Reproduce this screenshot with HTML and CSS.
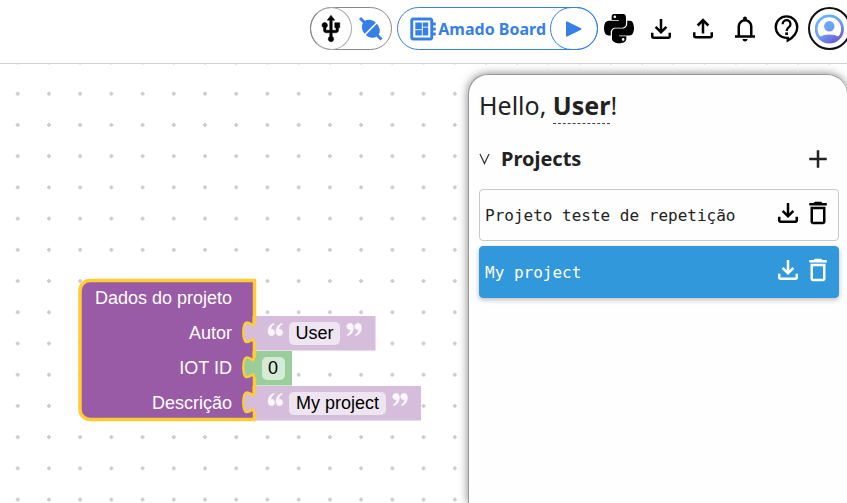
FILE: index.html
```html
<!DOCTYPE html>
<html lang="en">
<head>
<meta charset="utf-8">
<title>Block editor</title>
<link rel="stylesheet" href="styles.css">
</head>
<body>
<svg class="defs" aria-hidden="true">
  <symbol id="download" viewBox="0 0 24 24"><path d="M12 16l-5-5 1.400-1.450 2.600 2.600V4h2v8.150l2.600-2.600L17 11zM6 20q-.825 0-1.412-.587T4 18v-3h2v3h12v-3h2v3q0 .825-.587 1.413T18 20z"/></symbol>
  <symbol id="trash" viewBox="0 0 24 24"><path d="M6 19c0 1.100.9 2 2 2h8c1.100 0 2-.9 2-2V7H6v12zM8 9h8v10H8V9zm7.500-5-1-1h-5l-1 1H5v2h14V4z"/></symbol>
</svg>
<header class="topbar">
  <div class="pill serial">
    <button class="serial-usb" aria-label="USB"><svg class="icon" viewBox="0 0 24 24"><path d="M15 7v4h1v2h-3V5h2l-3-4-3 4h2v8H8v-2.070c.7-.37 1.200-1.080 1.200-1.930 0-1.210-.99-2.200-2.200-2.200-1.210 0-2.200.99-2.200 2.200 0 .85.5 1.560 1.200 1.930V13c0 1.110.89 2 2 2h3v3.050c-.71.37-1.200 1.100-1.200 1.950 0 1.220.99 2.200 2.200 2.200 1.210 0 2.200-.98 2.200-2.200 0-.85-.49-1.580-1.200-1.950V15h3c1.110 0 2-.89 2-2v-2h1V7h-4z" stroke="#000" stroke-width=".4"/></svg></button>
    <button class="serial-plug" aria-label="Connect"><svg class="icon blue" viewBox="0 0 30 30"><path d="M3 4l21.500 21.500" stroke="#347fe8" stroke-width="3"/><ellipse cx="13.800" cy="14.800" rx="10" ry="8" transform="rotate(45 13.800 14.800)"/><path d="M7 21.600L20.600 8" stroke="#fff" stroke-width="1.500"/></svg></button>
  </div>
  <div class="pill board">
    <button class="board-name"><svg class="icon blue" viewBox="0 0 24 24"><path d="M22 9V7h-2V5c0-1.100-.9-2-2-2H4c-1.100 0-2 .9-2 2v14c0 1.100.9 2 2 2h14c1.100 0 2-.9 2-2v-2h2v-2h-2v-2h2v-2h-2V9h2zm-4 10H4V5h14v14zM6 13h5v4H6v-4zm6-6h4v3h-4V7zM6 7h5v5H6V7zm6 4h4v6h-4v-6z" stroke="#347fe8" stroke-width=".3"/></svg>Amado Board</button>
    <button class="board-run" aria-label="Run"><svg class="icon blue" viewBox="0 0 30 30"><path d="M7 8.200q0-1.200 1.200-.7L22 14.300q1 .7 0 1.400L8.200 22.500q-1.200.5-1.200-.7z"/></svg></button>
  </div>
  <button class="tool" aria-label="Python code"><svg class="icon" viewBox="0 44 448 448"><path d="M439.800 200.500c-7.700-30.900-22.300-54.200-53.400-54.200h-40.100v47.400c0 36.800-31.200 67.800-66.800 67.800H172.700c-29.200 0-53.400 25-53.400 54.300v101.800c0 29 25.200 46 53.400 54.300 33.800 9.900 66.300 11.700 106.800 0 26.900-7.800 53.400-23.500 53.400-54.300v-40.700H226.200v-13.600h160.200c31.100 0 42.600-21.700 53.400-54.200 11.200-33.500 10.700-65.700 0-108.600zM286.200 404c11.100 0 20.100 9.100 20.100 20.300 0 11.300-9 20.400-20.100 20.400-11 0-20.100-9.200-20.100-20.400.1-11.300 9.100-20.300 20.100-20.300zM167.800 248.100h106.800c29.700 0 53.400-24.500 53.400-54.300V91.900c0-29-24.400-50.700-53.400-55.600-35.800-5.900-74.700-5.600-106.800.1-45.200 8-53.400 24.700-53.400 55.600v40.700h106.900v13.600h-147c-31.100 0-58.300 18.700-66.800 54.200-9.800 40.700-10.200 66.100 0 108.600 7.600 31.600 25.700 54.200 56.800 54.200H101v-48.800c0-35.300 30.500-66.400 66.800-66.400zm-6.700-142.600c-11.100 0-20.100-9.100-20.100-20.300.1-11.300 9-20.400 20.100-20.400 11 0 20.100 9.200 20.100 20.400s-9 20.300-20.100 20.300z"/></svg></button>
  <button class="tool" aria-label="Download"><svg class="icon"><use href="#download"/></svg></button>
  <button class="tool" aria-label="Upload"><svg class="icon" viewBox="0 0 24 24"><path d="M11 15.500V7.300L8.400 9.900 7 8.450l5-5 5 5-1.400 1.450-2.600-2.600v8.200zM6 19.500q-.825 0-1.412-.587T4 17.500v-3h2v3h12v-3h2v3q0 .825-.587 1.413T18 19.500z"/></svg></button>
  <button class="tool" aria-label="Notifications"><svg class="icon" viewBox="0 0 24 24"><path d="M4 19v-2h2v-7q0-2.075 1.250-3.687T10.500 4.200v-.7q0-.625.438-1.062T12 2t1.063.438T13.500 3.500v.7q2 .5 3.250 2.113T18 10v7h2v2zm8 3q-.825 0-1.412-.587T10 20h4q0 .825-.587 1.413T12 22m-4-5h8v-7q0-1.650-1.175-2.825T12 6 9.175 7.175 8 10z"/></svg></button>
  <button class="tool" aria-label="Help"><svg class="icon" viewBox="0 0 24 24"><path d="M11.600 1.900a8.600 8.600 0 0 1 8.600 8.600c0 4.300-3 8-7.600 10.700v-2.100h-1a8.600 8.600 0 0 1 0-17.200z" fill="none" stroke="#000" stroke-width="1.900"/><path d="M8.500 8.200a3.150 3.150 0 1 1 5.200 2.200c-1.100.9-2 1.500-2 3.100" fill="none" stroke="#000" stroke-width="1.800"/><path d="M10.600 14.700h2.200v2.100h-2.200z"/></svg></button>
  <button class="avatar" aria-label="Account"><svg class="icon" viewBox="0 0 30 30">
    <defs><linearGradient id="sky" gradientUnits="userSpaceOnUse" x1="6" y1="2" x2="24" y2="28"><stop offset="0" stop-color="#62b8fb"/><stop offset=".5" stop-color="#6e9df5"/><stop offset="1" stop-color="#6a55cb"/></linearGradient><clipPath id="disc"><circle cx="14.300" cy="15" r="14"/></clipPath></defs>
    <circle cx="14.300" cy="15" r="13.200" fill="none" stroke="url(#sky)" stroke-width="2.800"/><circle cx="14.300" cy="12.200" r="5.200" fill="url(#sky)"/><ellipse cx="14.300" cy="27" rx="13" ry="6.500" fill="url(#sky)" clip-path="url(#disc)"/></svg></button>
</header>
<main class="editor">
  <svg class="workspace" role="img" aria-label="Workspace">
    <defs>
      <pattern id="grid" x="2.100" y="14.100" width="31.220" height="31.220" patternUnits="userSpaceOnUse"><path d="M13.700 15.600h3.800M15.600 13.700v3.800" stroke="#ccc" stroke-width="1.900"/></pattern>
      <path id="quote" d="M6 .3C2 1.500 0 4.500 0 8.600C0 11.200 1.400 12.800 3.500 12.800C5.400 12.800 6.800 11.400 6.800 9.500C6.800 7.700 5.600 6.300 3.900 6.300C3.400 6.300 3 6.400 2.800 6.500C2.900 4.200 4 2.500 6.400 1.200Z"/>
      <g id="quotes" fill="#fff" fill-opacity=".85" stroke="#fff" stroke-opacity=".6" stroke-width=".6"><use href="#quote"/><use href="#quote" x="8"/></g>
      <path id="tab" d="M0 0v6.500c0 13-10.400-10.400-10.400 9.800s10.400-3.300 10.400 9.700"/>
    </defs>
    <rect width="100%" height="100%" fill="url(#grid)"/>
    <g transform="translate(80 216)">
      <path class="root" d="M10 .5H174.500V139.500H10a10 10 0 0 1-10-10V10.500a10 10 0 0 1 10-10z"/>
      <g class="label"><text x="152" y="24">Dados do projeto</text><text x="152" y="59">Autor</text><text x="152" y="94">IOT ID</text><text x="152" y="129">Descrição</text></g>
      <g transform="translate(175 36)">
        <use href="#tab" class="outline"/><path class="text-block" d="M1 0H120.500V34.500H1V26H0c0-13-10.400 10.500-10.400-9.700s10.400 3.200 10.400-9.800H1z"/>
        <use href="#quotes" x="13" y="7"/><rect class="field" x="34" y="6" width="51" height="23" rx="5"/><text class="value" x="59.500" y="23">User</text><use href="#quotes" transform="translate(106.500 20) rotate(180)"/>
      </g>
      <g transform="translate(175 71)">
        <use href="#tab" class="outline"/><path class="number-block" d="M1 0H37V34.500H1V26H0c0-13-10.400 10.500-10.400-9.700s10.400 3.200 10.400-9.800H1z"/>
        <rect class="field" x="7" y="6" width="23" height="23" rx="5"/><text class="value" x="18" y="23">0</text>
      </g>
      <g transform="translate(175 106)">
        <use href="#tab" class="outline"/><path class="text-block" d="M1 0H166V34.500H1V26H0c0-13-10.400 10.500-10.400-9.700s10.400 3.200 10.400-9.800H1z"/>
        <use href="#quotes" x="13" y="7"/><rect class="field" x="34" y="6" width="97" height="23" rx="5"/><text class="value" x="82.500" y="23">My project</text><use href="#quotes" transform="translate(152.500 20) rotate(180)"/>
      </g>
    </g>
  </svg>
  <aside class="panel">
    <h1 class="greeting">Hello, <b>User</b>!</h1>
    <div class="section">
      <button class="toggle"><svg class="chevron" viewBox="0 0 12 12"><path d="M1 1l4.500 9.500L10 1" fill="none" stroke="#333" stroke-width="1.200"/></svg>Projects</button>
      <button class="action" aria-label="New project"><svg class="icon" viewBox="0 0 24 24"><path d="M19 13h-6v6h-2v-6H5v-2h6V5h2v6h6v2z"/></svg></button>
    </div>
    <ul class="projects">
      <li class="project"><span class="name">Projeto teste de repetição</span><span class="actions"><button class="action" aria-label="Download project"><svg class="icon"><use href="#download"/></svg></button><button class="action" aria-label="Delete project"><svg class="icon"><use href="#trash"/></svg></button></span></li>
      <li class="project selected"><span class="name">My project</span><span class="actions"><button class="action" aria-label="Download project"><svg class="icon"><use href="#download"/></svg></button><button class="action" aria-label="Delete project"><svg class="icon"><use href="#trash"/></svg></button></span></li>
    </ul>
  </aside>
</main>
</body>
</html>
```
FILE: styles.css
```css
* { box-sizing: border-box; }
body {
  margin: 0;
  height: 100vh;
  display: flex;
  flex-direction: column;
  overflow: hidden;
  background: #fff;
  color: #222;
  font-family: "Noto Sans", sans-serif;
}
button {
  margin: 0;
  padding: 0;
  border: 0;
  background: none;
  color: inherit;
  font: inherit;
  display: flex;
  align-items: center;
  justify-content: center;
}
.defs { position: absolute; width: 0; height: 0; }
.icon { width: 30px; height: 30px; flex: none; fill: currentColor; display: block; }
.blue { fill: #347fe8; }

.topbar {
  display: flex;
  justify-content: flex-end;
  padding: 7px 0 13px;
  margin-right: -4px;
  border-bottom: 1px solid #d3d3d3;
  color: #000;
}
.pill { display: flex; height: 43px; border-radius: 22px; }
.serial { width: 82px; border: 1px solid #888; margin-right: 5px; }
.serial-usb {
  width: 42px;
  margin: -1px 0 -1px -1px;
  border: 1px solid #aaa;
  border-left-color: #888;
  border-radius: 50%;
}
.serial-plug { flex: 1; }
.board { border: 1px solid #347fe8; }
.board-name {
  padding: 0 4px 0 10px;
  color: #347fe8;
  font-size: 16px;
  font-weight: 700;
}
.board-run {
  width: 48px;
  margin: -1px -1px -1px 0;
  border: 1px solid #347fe8;
  border-radius: 24px;
}
.tool { width: 42px; height: 43px; }
.avatar { width: 43px; height: 43px; border: 2px solid #111; border-radius: 50%; }

.editor { flex: 1; min-height: 0; display: grid; }
.workspace { grid-area: 1 / 1; width: 100%; height: 100%; }
.workspace text { font-family: "Liberation Sans", sans-serif; font-size: 18px; }
.root { fill: #995ba5; stroke: #fc3; stroke-width: 3.5px; }
.label { fill: #fff; text-anchor: end; }
.outline { fill: none; stroke: #fc3; stroke-width: 5px; }
.text-block { fill: #d6bddb; }
.number-block { fill: #99cd99; }
.field { fill: #fff; fill-opacity: .6; }
.value { fill: #000; text-anchor: middle; }

.panel {
  grid-area: 1 / 1;
  justify-self: end;
  width: 379px;
  max-width: 100%;
  margin-top: 10px;
  padding: 11px 8px 0 10px;
  border: 1px solid #999;
  border-width: 1px 0 0 1px;
  border-radius: 20px 20px 0 0;
  background: #fefefe;
  box-shadow: 0 0 10px rgba(0, 0, 0, .5);
}
.greeting { margin: 0; font-size: 25px; line-height: 38px; font-weight: 400; }
.greeting b { padding-bottom: 1px; border-bottom: 1px dashed #444; }
.section { display: flex; justify-content: space-between; padding-right: 6px; margin: 20px 0 15px; }
.toggle { gap: 10px; font-size: 20px; line-height: 30px; font-weight: 700; }
.chevron { width: 12px; height: 12px; }
.projects { list-style: none; margin: 0; padding: 0; display: grid; gap: 5px; }
.project {
  display: flex;
  align-items: center;
  justify-content: space-between;
  height: 52px;
  padding: 0 5px;
  border: 1px solid #c8c8c8;
  border-radius: 4px;
  font-family: "DejaVu Sans Mono", monospace;
  font-size: 16px;
}
.selected {
  border-color: #3298dc;
  background: #3298dc;
  color: #fff;
  box-shadow: 0 2px 5px rgba(0, 0, 0, .25);
}
.actions { display: flex; padding-bottom: 4px; color: #000; }
.selected .actions { color: #fff; }
```
